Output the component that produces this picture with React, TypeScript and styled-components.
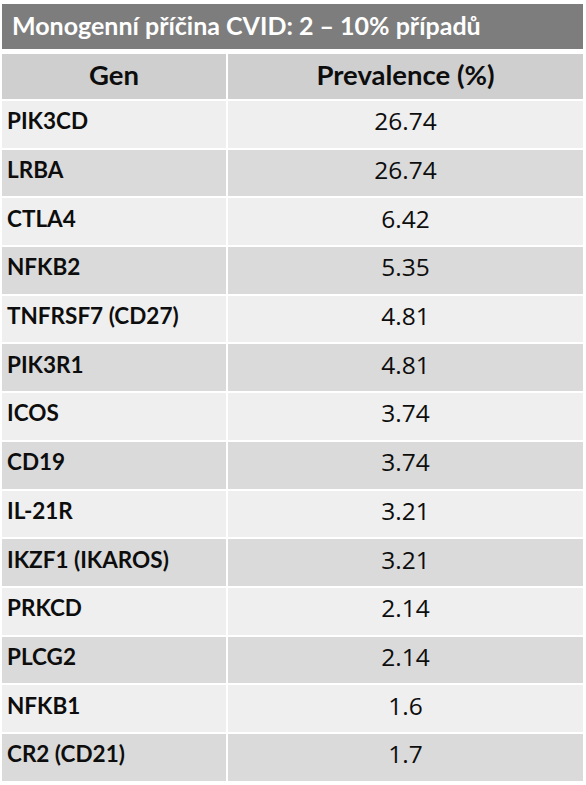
import * as React from "react";
import styled, { createGlobalStyle } from "styled-components";

const GlobalStyle = createGlobalStyle`
    body {
        margin: 0;
        background: #ffffff;
        font-family: Lato, "Liberation Sans", sans-serif;
    }
`;

const Sheet = styled.div`
    width: 581px;
    padding: 4px 0 0 2px;
    display: flex;
    flex-direction: column;
    gap: 5px;
`;

const Title = styled.div`
    height: 45px;
    box-sizing: border-box;
    background-color: #7d7d7d;
    color: #ffffff;
    font-size: 25px;
    font-weight: 700;
    display: flex;
    align-items: center;
    padding: 0 0 4px 10px;
`;

const Table = styled.div`
    display: grid;
    grid-template-columns: 224px 1fr;
    column-gap: 2px;
    row-gap: 2px;
`;

const Cell = styled.div<{ $tone: string }>`
    height: 46.7px;
    box-sizing: border-box;
    background-color: ${(p) => p.$tone};
    display: flex;
    align-items: center;
    padding-bottom: 7px;
    color: #0d0d0d;
`;

const HeadCell = styled(Cell)`
    height: 45px;
    justify-content: center;
    font-size: 27.5px;
    font-weight: 700;
    padding-bottom: 4px;
`;

const GeneCell = styled(Cell)`
    padding-left: 5px;
    font-size: 22.5px;
    font-weight: 700;
`;

const ValueCell = styled(Cell)`
    justify-content: center;
    font-family: "Open Sans", "Liberation Sans", sans-serif;
    font-size: 24.5px;
    font-weight: 400;
`;

const rows: [string, string][] = [
    ["PIK3CD", "26.74"],
    ["LRBA", "26.74"],
    ["CTLA4", "6.42"],
    ["NFKB2", "5.35"],
    ["TNFRSF7 (CD27)", "4.81"],
    ["PIK3R1", "4.81"],
    ["ICOS", "3.74"],
    ["CD19", "3.74"],
    ["IL-21R", "3.21"],
    ["IKZF1 (IKAROS)", "3.21"],
    ["PRKCD", "2.14"],
    ["PLCG2", "2.14"],
    ["NFKB1", "1.6"],
    ["CR2 (CD21)", "1.7"],
];

export default function App() {
    return (
        <>
            <GlobalStyle />
            <Sheet>
                <Title>Monogenní příčina CVID: 2 – 10% případů</Title>
                <Table>
                    <HeadCell $tone="#cfcfcf">Gen</HeadCell>
                    <HeadCell $tone="#cfcfcf">Prevalence (%)</HeadCell>
                    {rows.map(([gene, value], i) => {
                        const tone = i % 2 === 0 ? "#efefef" : "#dadada";
                        return (
                            <React.Fragment key={gene}>
                                <GeneCell $tone={tone}>{gene}</GeneCell>
                                <ValueCell $tone={tone}>{value}</ValueCell>
                            </React.Fragment>
                        );
                    })}
                </Table>
            </Sheet>
        </>
    );
}
